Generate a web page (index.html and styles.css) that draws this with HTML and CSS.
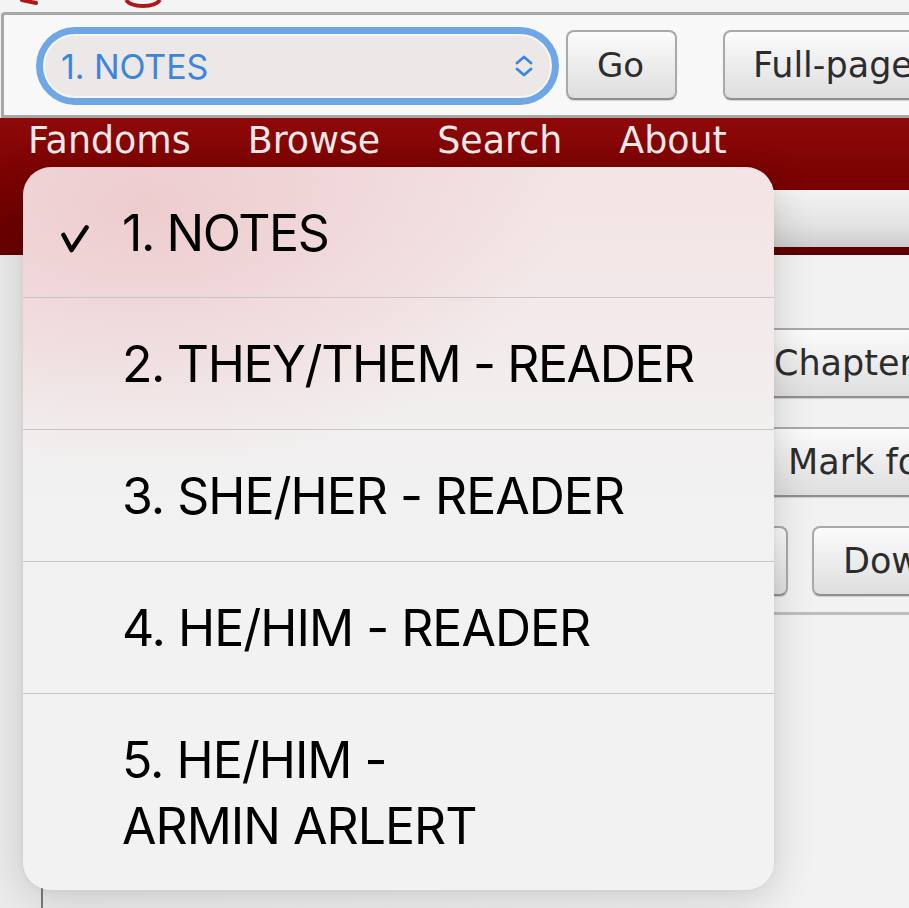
FILE: index.html
```html
<!DOCTYPE html>
<html lang="en">
<head>
<meta charset="utf-8">
<title>Chapter select</title>
<link rel="stylesheet" href="styles.css">
</head>
<body>
<div class="logo-strip">
  <svg class="logo" width="200" height="12" viewBox="0 0 200 12">
    <path d="M22 0 L36 3" stroke="#b01818" stroke-width="4" fill="none" stroke-linecap="round"/>
    <path d="M126 0 Q130 6 143 6 Q156 6 160 0" stroke="#b01818" stroke-width="4" fill="none"/>
  </svg>
</div>
<form class="chapter-form">
  <div class="select-ring">
    <div class="select">
      <span class="select-value">1. NOTES</span>
      <svg class="chev" width="22" height="24" viewBox="0 0 22 24">
        <path d="M4 9 L11 3 L18 9" stroke="#3b86dc" stroke-width="2.8" fill="none" stroke-linecap="round" stroke-linejoin="round"/>
        <path d="M4 15 L11 21 L18 15" stroke="#3b86dc" stroke-width="2.8" fill="none" stroke-linecap="round" stroke-linejoin="round"/>
      </svg>
    </div>
  </div>
  <button type="button" class="btn go">Go</button>
  <button type="button" class="btn full">Full-page index</button>
</form>
<header class="primary">
  <ul class="nav">
    <li>Fandoms</li>
    <li>Browse</li>
    <li>Search</li>
    <li>About</li>
  </ul>
  <div class="subbar"></div>
</header>
<main class="page">
  <ul class="work-nav">
    <li class="row r1"><button type="button" class="btn">Chapter Index</button></li>
    <li class="row r2"><button type="button" class="btn">Mark for Later</button></li>
    <li class="row r3"><button type="button" class="btn share">Share</button><button type="button" class="btn dl">Download</button></li>
  </ul>
  <div class="content-box"></div>
</main>
<div class="picker">
  <div class="opt selected">
    <svg class="check" width="28" height="28" viewBox="0 0 28 28">
      <path d="M2.5 10 L10.5 25 L25.5 2.5" stroke="#000" stroke-width="4.6" fill="none" stroke-linecap="round" stroke-linejoin="round"/>
    </svg>
    <span>1. NOTES</span>
  </div>
  <div class="opt"><span>2. THEY/THEM - READER</span></div>
  <div class="opt"><span class="wide">3. SHE/HER - READER</span></div>
  <div class="opt"><span class="wide">4. HE/HIM - READER</span></div>
  <div class="opt"><span class="wide">5. HE/HIM -<br>ARMIN ARLERT</span></div>
</div>
</body>
</html>
```

FILE: styles.css
```css
html, body {
  margin: 0;
  padding: 0;
}
body {
  width: 909px;
  height: 908px;
  overflow: hidden;
  background: #efefef;
  font-family: "DejaVu Sans", sans-serif;
  position: relative;
}
.logo-strip {
  height: 12px;
  background: #f4f4f4;
  overflow: hidden;
}
.logo {
  display: block;
}
.chapter-form {
  display: flex;
  align-items: center;
  height: 100px;
  margin: 0 0 0 1px;
  padding: 0 0 0 32px;
  border: 3px solid #a7a7a7;
  border-right: none;
  border-radius: 4px 0 0 0;
  background: #f8f8f8;
  white-space: nowrap;
  box-sizing: content-box;
}
.chapter-form > * {
  flex-shrink: 0;
}
.select-ring {
  width: 523px;
  height: 78px;
  box-sizing: border-box;
  padding: 7px;
  border-radius: 40px;
  background: #6ea6e6;
  margin-top: 2px;
}
.select {
  height: 100%;
  box-sizing: border-box;
  border: 2px solid #f6f6f6;
  border-radius: 32px;
  background: #ebe8e7;
  display: flex;
  align-items: center;
  justify-content: space-between;
  padding: 0 15px 0 16px;
}
.select-value {
  font-family: Inter, "Noto Sans", sans-serif;
  font-size: 34px;
  color: #3b86dc;
  letter-spacing: -0.1px;
}
.chev {
  display: block;
  flex-shrink: 0;
}
.btn {
  font-family: "DejaVu Sans", sans-serif;
  font-size: 35px;
  line-height: 42px;
  color: #2c2c2c;
  height: 70px;
  box-sizing: border-box;
  padding: 12px 26px;
  border: 2px solid #a9a9a9;
  border-bottom-color: #8f8f8f;
  border-radius: 8px;
  background: linear-gradient(#fbfbfb, #dedede);
  box-shadow: 0 1px 1px rgba(0,0,0,0.15);
  white-space: nowrap;
  flex-shrink: 0;
}
.go {
  margin-left: 7px;
  font-size: 34px;
  padding: 12px 30px 12px 28px;
  width: 111px;
}
.full {
  margin-left: 46px;
  padding-left: 28px;
}
.primary {
  background: linear-gradient(180deg, #8f0909 0%, #7a0202 45%, #660000 100%);
}
.nav {
  list-style: none;
  margin: 0;
  padding: 1px 0 0 28px;
  height: 71px;
  display: flex;
  gap: 57px;
  font-size: 36.4px;
  line-height: 44px;
  color: #f1eaea;
  white-space: nowrap;
}
.subbar {
  margin-left: 40px;
  height: 57px;
  background: linear-gradient(180deg, #f4f4f4 0%, #e3e3e3 60%, #cdcdcd 100%);
  border-bottom: 8px solid #5e0000;
  box-shadow: 0 3px 0 #1a0000;
}
.page {
  padding-top: 3px;
  background: linear-gradient(90deg, #ebebeb 0, #f0f0f0 60%, #f2f2f2 100%);
}
.work-nav {
  list-style: none;
  margin: 70px 0 0 600px;
  padding: 0 0 16px 0;
  border-bottom: 3px solid #bdbdbd;
  display: flex;
  flex-direction: column;
  gap: 29px;
}
.row {
  display: flex;
  gap: 24px;
  white-space: nowrap;
}
.r1 { margin-left: 146px; }
.r2 { margin-left: 160px; }
.r3 { margin-left: 30px; }
.share { width: 158px; }
.dl { padding-left: 29px; }
.content-box {
  margin: 269px 0 0 41px;
  height: 60px;
  border-left: 2px solid #7a7a7a;
}
.picker {
  position: absolute;
  left: 23px;
  top: 167px;
  width: 751px;
  height: 723px;
  border-radius: 28px;
  overflow: hidden;
  background:
    radial-gradient(ellipse 420px 260px at 120px 40px, rgba(236,196,199,0.75), rgba(236,196,199,0) 100%),
    linear-gradient(180deg, #f3e3e4 0px, #f3e9ea 140px, #f2eeee 230px, #f2f1f1 320px, #f2f2f2 420px);
  box-shadow: 0 8px 40px rgba(0,0,0,0.16), 0 0 6px rgba(0,0,0,0.05);
  font-family: Inter, "Noto Sans", sans-serif;
  color: #000;
}
.opt {
  display: flex;
  align-items: flex-start;
  padding: 33px 0 32px 99px;
  font-size: 50px;
  line-height: 66px;
  letter-spacing: -1.4px;
  border-top: 1px solid #c7c5c5;
}
.opt .wide {
  letter-spacing: -1px;
}
.opt.selected {
  border-top: none;
  padding: 33px 0 31px 38px;
}
.check {
  margin: 25px 33px 0 0;
  flex-shrink: 0;
}
```
